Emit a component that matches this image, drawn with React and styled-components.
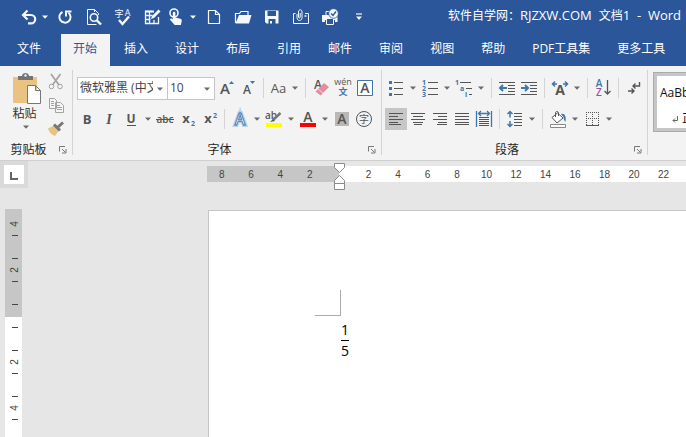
import React from "react";
import styled, { createGlobalStyle, css } from "styled-components";

const GlobalStyle = createGlobalStyle`
  * { box-sizing: border-box; }
  body {
    margin: 0;
    overflow: hidden;
    background: #e6e6e6;
    color: #262626;
    font: 12px/16px "Open Sans", "Noto Sans CJK SC", sans-serif;
  }
  button, input { font: inherit; color: inherit; }
  svg { overflow: visible; }
`;

const blue = "#2b579a";
const ink = "#555555";
const accent = "#3f76ac";

const Window = styled.div`
  display: flex;
  flex-direction: column;
  min-height: 100vh;
  overflow: hidden;
`;

const TitleBar = styled.header`
  display: flex;
  align-items: center;
  height: 34px;
  padding: 0 5px 0 18px;
  background: ${blue};
  color: #fff;
`;

const QuickAccess = styled.div`
  display: flex;
  align-items: center;
  flex: 1;
`;

const PlainButton = styled.button`
  display: flex;
  align-items: center;
  justify-content: center;
  flex: none;
  padding: 0;
  border: 0;
  background: none;
  white-space: nowrap;
`;

const QuickButton = styled(PlainButton)`
  width: ${(p) => p.$w || 29}px;
  height: 24px;
  color: #f4f7fc;
`;

const Title = styled.h1`
  display: flex;
  align-items: baseline;
  gap: 7px;
  margin: 0;
  padding-bottom: 4px;
  font-size: 12px;
  font-weight: 400;
  white-space: pre;
`;

const Latin = styled.span`
  font-size: 13px;
`;

const TabBar = styled.nav`
  display: flex;
  gap: 2px;
  height: 32px;
  padding-left: 5px;
  background: ${blue};
`;

const Tab = styled(PlainButton)`
  padding: 0 13px 2px 12px;
  color: #fff;
  ${(p) => p.$file && css`margin-right: 5px;`}
  ${(p) => p.$active && css`background: #f3f3f3; color: ${blue};`}
`;

const Ribbon = styled.div`
  display: flex;
  flex: none;
  height: 95px;
  overflow: hidden;
  background: #f3f3f3;
  border-bottom: 1px solid #cfcfcf;
`;

const Group = styled.section`
  position: relative;
  display: flex;
  flex-direction: column;
  flex: none;
  width: ${(p) => p.$w}px;
  padding: 10px 1px 1px 3px;
  gap: 7px;
  &::after {
    content: "";
    position: absolute;
    inset: 4px 0 5px auto;
    width: 1px;
    background: #d4d4d4;
  }
`;

const Row = styled.div`
  display: flex;
  align-items: center;
  height: 24px;
`;

const Divider = styled.span`
  flex: none;
  width: 1px;
  height: 20px;
  margin: 0 4px;
  background: #d4d4d4;
`;

const Tool = styled(PlainButton)`
  width: ${(p) => p.$w || 22}px;
  height: 22px;
  color: ${ink};
  font-size: 13px;
  background: ${(p) => (p.$pressed ? "#c6c6c6" : "none")};
`;

const CaretButton = styled(PlainButton)`
  width: 12px;
  height: 22px;
  color: #6a6a6a;
`;

const GroupFooter = styled.footer`
  display: flex;
  align-items: center;
  margin-top: auto;
  height: 18px;
`;

const GroupLabel = styled.span`
  flex: 1;
  text-align: center;
`;

const Launcher = styled(PlainButton)`
  width: 18px;
  height: 14px;
`;

const ClipboardBody = styled.div`
  display: flex;
  flex: none;
  height: 62px;
  gap: 6px;
  margin-top: -4px;
`;

const PasteButton = styled(PlainButton)`
  flex-direction: column;
  justify-content: flex-start;
  width: 40px;
  padding-left: 5px;
  color: #6a6a6a;
`;

const PasteLabel = styled.span`
  margin: 1px 2px 3px 0;
  color: #333;
`;

const SmallTools = styled.div`
  display: flex;
  flex-direction: column;
  gap: 1px;
  margin-left: -4px;
  margin-top: -1px;
`;

const Combo = styled.label`
  display: flex;
  flex: none;
  width: ${(p) => p.$w}px;
  height: 23px;
  padding-right: 1px;
  margin-left: ${(p) => (p.$joined ? "-1px" : "1px")};
  border: 1px solid #c6c6c6;
  background: #fff;
`;

const ComboInput = styled.input`
  flex: 1;
  min-width: 0;
  padding: 0 1px 0 2px;
  border: 0;
  outline: 0;
  background: none;
  color: #444;
`;

const StyleGallery = styled.div`
  flex: 1;
  min-width: 0;
  padding: 6px 0 0 5px;
`;

const StyleCard = styled(PlainButton)`
  flex-direction: column;
  align-items: flex-start;
  justify-content: space-between;
  width: 76px;
  height: 60px;
  padding: 9px 3px 1px;
  color: #111;
  background: #fff;
  border: 4px solid #c6c6c6;
  outline: 1px solid #ababab;
  outline-offset: -1px;
`;

const StyleName = styled.span`
  display: flex;
  align-items: center;
  gap: 4px;
  padding-left: 12px;
`;

const Workspace = styled.main`
  display: grid;
  grid-template-columns: 207px minmax(0, 1fr);
  grid-template-rows: 48px minmax(0, 1fr);
  flex: 1;
`;

const TabStop = styled(PlainButton)`
  width: 28px;
  height: 27px;
  background: #fff;
  border: 4px solid #dadada;
`;

const HorizontalRuler = styled.div`
  position: relative;
  display: flex;
  height: 16px;
  margin-top: 5px;
  background: #fff;
  color: #444;
  font: 10px/17px "Liberation Sans", sans-serif;
  text-align: center;
`;

const RulerMargin = styled.div`
  display: grid;
  grid-template-columns: repeat(4, 2fr) 1fr;
  flex: none;
  width: 132px;
  background: #c6c6c6;
`;

const RulerScale = styled.div`
  display: flex;
  flex: 1;
  min-width: 0;
  overflow: hidden;
  padding-left: 15px;
`;

const RulerNumber = styled.span`
  flex: none;
  width: 29px;
  &:nth-child(even) { width: 30px; }
`;

const MarginNumber = styled.span``;

const IndentMarker = styled.svg`
  position: absolute;
  left: 126px;
  top: -4px;
`;

const VerticalRuler = styled.div`
  display: flex;
  flex-direction: column;
  width: 17px;
  margin-left: 5px;
  font: 10px/14px "Liberation Sans", sans-serif;
`;

const VerticalPart = styled.div`
  display: flex;
  flex-direction: column;
  align-items: center;
  gap: 22px;
  flex: ${(p) => (p.$margin ? "none" : "1")};
  padding: ${(p) => (p.$margin ? "3px 0 0 3px" : "0 0 0 3px")};
  background: ${(p) => (p.$margin ? "#c6c6c6" : "#fff")};
`;

const VerticalMark = styled.div`
  display: flex;
  align-items: center;
  justify-content: center;
  flex: none;
  width: 6px;
  height: ${(p) => p.$h || 24}px;
  border-top: ${(p) => (p.$top ? "1px solid #444" : "0")};
  border-bottom: ${(p) => (p.$bottom ? "1px solid #444" : "0")};
`;

const Rotated = styled.span`
  transform: rotate(-90deg);
  color: #444;
`;

const Page = styled.article`
  margin: 1px 0 0 1px;
  padding: 79px 106px;
  background: #fff;
  border: 1px solid #c6c6c6;
  border-width: 1px 0 0 1px;
`;

const MarginCorner = styled.div`
  width: 26px;
  height: 26px;
  border: solid #ababab;
  border-width: 0 1px 1px 0;
`;

const Fraction = styled.div`
  display: flex;
  flex-direction: column;
  width: 8px;
  margin: 4px 0 0 26px;
  color: #000;
  font: 14px/20px "Open Sans", sans-serif;
  text-align: center;
`;

const Numerator = styled.span`
  border-bottom: 1px solid #000;
`;

const ui = { fontFamily: '"Open Sans", "Noto Sans CJK SC", sans-serif' };

function Svg({ w = 20, h = 20, children, ...rest }) {
  return (
    <svg width={w} height={h} viewBox={`0 0 ${w} ${h}`} fill="none" stroke="currentColor" aria-hidden="true" {...rest}>
      {children}
    </svg>
  );
}

function Glyph({ children, ...rest }) {
  return <text stroke="none" fill="currentColor" textAnchor="middle" {...ui} {...rest}>{children}</text>;
}

function Triangle() {
  return <Svg w={6} h={4}><path d="M0 .5h6L3 3.8z" fill="currentColor" stroke="none" /></Svg>;
}

function Caret({ label }) {
  return <CaretButton aria-label={label}><Triangle /></CaretButton>;
}

function Lines({ rows, color = ink }) {
  return rows.map(([x1, x2, y], i) => <path key={i} d={`M${x1} ${y}.5H${x2}`} stroke={color} />);
}

const quick = [
  ["撤消", 22, <Svg key="i"><path d="M4.500 8H12a4.200 4.200 0 0 1 0 8.400H9" strokeWidth="2.200" /><path d="M8.500 3.500L4 8l4.500 4.500" strokeWidth="2.200" /></Svg>],
  ["撤消选项", 10, <Triangle key="i" />],
  ["重复", 29, <Svg key="i"><path d="M7.500 5A5.600 5.600 0 1 0 13.500 5.700" strokeWidth="2" /><path d="M11 9.500V4.500H16.500" strokeWidth="2" /></Svg>],
  ["打印预览", 29, <Svg key="i"><path d="M12.500 17.500H3.500V2.500H10.500L14.500 6.500V8M10.500 2.500V5" /><circle cx="10" cy="10.500" r="3.700" strokeWidth="1.600" /><path d="M12.800 13.300L17 17.500" strokeWidth="2.400" /></Svg>],
  ["拼写和语法", 29, <Svg key="i"><Glyph x="6" y="10" fontSize="9">字</Glyph><Glyph x="14.500" y="9" fontSize="9">A</Glyph><path d="M6 13l3.500 4L16 9.500" strokeWidth="2.400" /></Svg>],
  ["绘制表格", 29, <Svg key="i"><path d="M10 4.500H3.500v12h13V10M3.500 8.500h7M3.500 12.500h5M7.500 5v11.500M12 13v3.500" strokeWidth="1.300" /><path d="M3 4.500h9" strokeWidth="2" /><path d="M9 12l1-3 6.500-6.500 2 2L12 11z" fill="currentColor" stroke="none" /></Svg>],
  ["触摸/鼠标模式", 20, <Svg key="i"><circle cx="8" cy="6" r="4" strokeWidth="1.600" /><path d="M6.800 6c0-1.700 2.600-1.700 2.600 0v4.500l5 1.200c1.400.4 1.500 1.300 1.300 2.600l-.8 3.700H8.700L4.300 13c-.8-1 .3-2 1.400-1.400l1.100.8z" fill="currentColor" stroke="none" /></Svg>],
  ["触摸选项", 13, <Triangle key="i" />],
  ["新建", 29, <Svg key="i"><path d="M4.500 3.500h7l4 4v9h-11zM11.500 3.500v4h4" strokeWidth="1.200" /></Svg>],
  ["打开", 29, <Svg key="i"><path d="M2.500 16V6.500h4l1.500-2h7V8" strokeWidth="1.200" /><path d="M2.500 16.500L6 8h12.500L16 16.500z" fill="currentColor" stroke="none" /></Svg>],
  ["保存", 29, <Svg key="i"><path d="M3 3.500h13.500v13H4.500L3 15zM5.500 4v5h8.500V4zM6.500 12v4.500h7V12z" fill="currentColor" fillRule="evenodd" stroke="none" /><path d="M8 14h2v2.500H8z" fill="currentColor" stroke="none" /></Svg>],
  ["电子邮件", 29, <Svg key="i"><path d="M4.500 6.500h-2v10h15v-10H14" /><path d="M6 7v3.500c0 4 5 4 5 0V5c0-3-3.500-3-3.500 0v5c0 1.400 1.700 1.400 1.700 0V6" /><path d="M13.500 9h2" strokeWidth="1.500" /></Svg>],
  ["快速打印", 29, <Svg key="i"><path d="M6 8V4.500h5" /><path d="M2 8h15.500v7H15v-2H5v2H2z" fill="currentColor" stroke="none" /><path d="M6.500 11.500h7v6h-7z" fill={blue} /><circle cx="13.500" cy="6.500" r="4.800" fill="currentColor" stroke={blue} strokeWidth=".8" /><path d="M11 6.500l2 2L16 4.500" stroke={blue} strokeWidth="1.300" /></Svg>],
  ["自定义快速访问工具栏", 29, <Svg key="i" w={6} h={8}><path d="M0 1h6" strokeWidth="1.200" /><path d="M0 3.500h6l-3 3.500z" fill="currentColor" stroke="none" /></Svg>],
];

const tabs = ["文件", "开始", "插入", "设计", "布局", "引用", "邮件", "审阅", "视图", "帮助", "PDF工具集", "更多工具"];

function Footer({ children }) {
  return (
    <GroupFooter>
      <GroupLabel>{children}</GroupLabel>
      <Launcher aria-label={`${children}设置`}>
        <Svg w={8} h={8}><path d="M.5 5.500V.5H6M3 3l3 3M7 3v4H3" stroke="#777" /></Svg>
      </Launcher>
    </GroupFooter>
  );
}

function ClipboardGroup() {
  return (
    <Group $w={73}>
      <ClipboardBody>
        <PasteButton>
          <Svg w={30} h={33}>
            <path d="M2 5h24v26H2z" fill="#eac282" stroke="none" />
            <path d="M7 8V4h4c0-4 7-4 7 0h4v4z" fill="#737373" stroke="none" />
            <circle cx="14.500" cy="3.500" r="1.200" fill="#f3f3f3" stroke="none" />
            <path d="M16.500 13.500h8l5 5v13h-13zM24.500 13.500v5h5" fill="#fff" stroke="#777" />
          </Svg>
          <PasteLabel>粘贴</PasteLabel>
          <Triangle />
        </PasteButton>
        <SmallTools>
          <Tool aria-label="剪切"><Svg><path d="M5 2l8 11M14.500 2L6.500 13" stroke="#a3a3a3" strokeWidth="1.700" /><circle cx="5.500" cy="14.500" r="2.300" stroke="#a3a3a3" /><circle cx="14" cy="14.500" r="2.300" stroke="#a3a3a3" /></Svg></Tool>
          <Tool aria-label="复制"><Svg><path d="M3.500 3.500h5l2 2v8h-7zM9.500 7.500h5l3 3v7h-8z" fill="#f5f5f5" stroke="#a3a3a3" /><path d="M5 6.500h3M5 8.500h3M5 10.500h3M11 10.500h3M11 12.500h5M11 14.500h5" stroke="#a3a3a3" /></Svg></Tool>
          <Tool aria-label="格式刷"><Svg><path d="M2 10.500l6-3 5 5-4 5.500c-3-1-6-3.500-7-7.500z" fill="#eac282" stroke="none" /><path d="M8 6.500l6 6" stroke="#777" strokeWidth="3" /><path d="M12 9l5-4.500" stroke="#777" strokeWidth="3" /></Svg></Tool>
        </SmallTools>
      </ClipboardBody>
      <Footer>剪贴板</Footer>
    </Group>
  );
}

function FontGroup() {
  return (
    <Group $w={309}>
      <Row>
        <Combo $w={91}><ComboInput aria-label="字体" defaultValue="微软雅黑 (中文标题)" /><Caret label="字体列表" /></Combo>
        <Combo $w={48} $joined><ComboInput aria-label="字号" defaultValue="10" /><Caret label="字号列表" /></Combo>
        <Tool aria-label="增大字号"><Svg><Glyph x="9" y="16" fontSize="15" fontWeight="600">A</Glyph><path d="M13 6h5l-2.500-3z" fill={accent} stroke="none" /></Svg></Tool>
        <Tool aria-label="缩小字号"><Svg><Glyph x="9" y="16" fontSize="12" fontWeight="600">A</Glyph><path d="M12 3h5l-2.500 3z" fill={accent} stroke="none" /></Svg></Tool>
        <Divider />
        <Tool $w={21} aria-label="更改大小写">Aa</Tool><Caret label="大小写选项" />
        <Divider />
        <Tool aria-label="清除格式"><Svg><Glyph x="7" y="11" fontSize="12" fontWeight="600">A</Glyph><path d="M4.500 13.500L13 5l5 4-8.500 8.500z" fill="#e58c9e" stroke="none" /><path d="M7 11l5 4" stroke="#f6d5dc" /></Svg></Tool>
        <Tool aria-label="拼音指南"><Svg><Glyph x="10" y="7" fontSize="9">wén</Glyph><Glyph x="10" y="17" fontSize="9" fontWeight="700" fill={accent}>文</Glyph></Svg></Tool>
        <Tool aria-label="字符边框"><Svg><path d="M2.500 2.500h15v15h-15z" stroke={accent} fill="#fff" /><Glyph x="10" y="15" fontSize="14" fontWeight="600">A</Glyph></Svg></Tool>
      </Row>
      <Row>
        <Tool aria-label="加粗"><b>B</b></Tool>
        <Tool aria-label="倾斜"><Svg><Glyph x="10" y="15" fontSize="14" fontStyle="italic" fontFamily="Liberation Serif" fontWeight="700">I</Glyph></Svg></Tool>
        <Tool aria-label="下划线"><Svg><Glyph x="10" y="14" fontSize="12" fontWeight="700">U</Glyph><path d="M6 16.500h9" /></Svg></Tool><Caret label="下划线选项" />
        <Tool aria-label="删除线"><Svg><Glyph x="10" y="14" fontSize="10" fontWeight="600">abc</Glyph><path d="M1 10.500h18" /></Svg></Tool>
        <Tool aria-label="下标"><Svg><Glyph x="9" y="14" fontSize="13" fontWeight="700">x</Glyph><Glyph x="16" y="17" fontSize="7" fontWeight="700" fill={accent}>2</Glyph></Svg></Tool>
        <Tool aria-label="上标"><Svg><Glyph x="9" y="14" fontSize="13" fontWeight="700">x</Glyph><Glyph x="16" y="9" fontSize="7" fontWeight="700" fill={accent}>2</Glyph></Svg></Tool>
        <Divider />
        <Tool aria-label="文本效果"><Svg><text x="10" y="16" fontSize="16" textAnchor="middle" fill="#fff" stroke="#b5d2ec" strokeWidth="4" {...ui}>A</text><text x="10" y="16" fontSize="16" fontWeight="600" textAnchor="middle" fill="#fff" stroke={accent} strokeWidth=".9" {...ui}>A</text></Svg></Tool><Caret label="文本效果选项" />
        <Tool aria-label="突出显示"><Svg><Glyph x="7" y="10" fontSize="10" fontWeight="600">ab</Glyph><path d="M9 11l7.500-7" stroke="#777" strokeWidth="2.500" /><path d="M6 13l3-3 2 2z" fill="#555" stroke="none" /><path d="M2 14h16v4H2z" fill="#ff0" stroke="none" /></Svg></Tool><Caret label="突出显示颜色" />
        <Tool aria-label="字体颜色"><Svg><Glyph x="10" y="13" fontSize="14" fontWeight="600">A</Glyph><path d="M2 14h16v4H2z" fill="#f00" stroke="none" /></Svg></Tool><Caret label="字体颜色选项" />
        <Tool aria-label="字符底纹"><Svg><path d="M3 3h14v14H3z" fill="#b8b8b8" stroke="none" /><Glyph x="10" y="15" fontSize="14" fontWeight="600">A</Glyph></Svg></Tool>
        <Tool aria-label="带圈字符"><Svg><circle cx="10" cy="10" r="7.500" /><Glyph x="10" y="14" fontSize="10">字</Glyph></Svg></Tool>
      </Row>
      <Footer>字体</Footer>
    </Group>
  );
}

function ParagraphGroup() {
  return (
    <Group $w={266}>
      <Row>
        <Tool aria-label="项目符号"><Svg><path d="M3 3h3v3H3zM3 9h3v3H3zM3 15h3v3H3z" fill={accent} stroke="none" /><Lines rows={[[8, 17, 4], [8, 17, 10], [8, 17, 16]]} /></Svg></Tool><Caret label="项目符号选项" />
        <Tool aria-label="编号"><Svg>{[1, 2, 3].map((n) => <Glyph key={n} x="4" y={n * 6 + 1} fontSize="7" fontWeight="700" fill={accent}>{n}</Glyph>)}<Lines rows={[[8, 18, 4], [8, 18, 10], [8, 18, 16]]} /></Svg></Tool><Caret label="编号选项" />
        <Tool aria-label="多级列表"><Svg><Glyph x="3" y="7" fontSize="7" fontWeight="700" fill={accent}>1</Glyph><Glyph x="8" y="13" fontSize="7" fontWeight="700" fill={accent}>a</Glyph><Glyph x="12" y="19" fontSize="7" fontWeight="700" fill={accent}>i</Glyph><Lines rows={[[6, 17, 4], [12, 18, 10], [15, 18, 16]]} /></Svg></Tool><Caret label="多级列表选项" />
        <Divider />
        <Tool aria-label="减少缩进量"><Svg><Lines rows={[[2, 18, 4], [11, 18, 7], [11, 18, 10], [11, 18, 13], [2, 18, 16]]} /><path d="M3 10h7M6 7l-3 3 3 3" stroke={accent} strokeWidth="2" /></Svg></Tool>
        <Tool aria-label="增加缩进量"><Svg><Lines rows={[[2, 18, 4], [11, 18, 7], [11, 18, 10], [11, 18, 13], [2, 18, 16]]} /><path d="M2 10h7M6 7l3 3-3 3" stroke={accent} strokeWidth="2" /></Svg></Tool>
        <Divider />
        <Tool aria-label="中文版式"><Svg><Glyph x="10" y="17" fontSize="14" fontWeight="700">A</Glyph><path d="M2 6h5M13 6h5M5 3.500L2.500 6 5 8.500M15 3.500L17.500 6 15 8.500" stroke={accent} strokeWidth="1.500" /></Svg></Tool><Caret label="中文版式选项" />
        <Divider />
        <Tool aria-label="排序"><Svg><Glyph x="6" y="9" fontSize="10" fontWeight="600" fill={accent}>A</Glyph><Glyph x="6" y="18" fontSize="10" fontWeight="600" fill="#9d4fa6">Z</Glyph><path d="M14.500 2v14M11.500 13l3 3 3-3" strokeWidth="1.300" /></Svg></Tool>
        <Divider />
        <Tool aria-label="显示编辑标记"><Svg><path d="M15.500 4v4H9M11.500 5.500L9 8l2.500 2.500" strokeWidth="1.400" /><path d="M4 13h6M7.500 10.500L10 13l-2.500 2.500" strokeWidth="1.400" /></Svg></Tool>
      </Row>
      <Row>
        <Tool $pressed aria-pressed="true" aria-label="左对齐"><Svg><Lines rows={[[3, 17, 4], [3, 12, 7], [3, 17, 10], [3, 12, 13], [3, 15, 15]]} /></Svg></Tool>
        <Tool aria-label="居中"><Svg><Lines rows={[[3, 17, 4], [5, 15, 7], [3, 17, 10], [5, 15, 13], [6, 14, 15]]} /></Svg></Tool>
        <Tool aria-label="右对齐"><Svg><Lines rows={[[3, 17, 4], [8, 17, 7], [3, 17, 10], [8, 17, 13], [7, 17, 15]]} /></Svg></Tool>
        <Tool aria-label="两端对齐"><Svg><Lines rows={[[3, 17, 4], [3, 17, 7], [3, 17, 10], [3, 17, 13], [3, 17, 15]]} /></Svg></Tool>
        <Tool aria-label="分散对齐"><Svg><path d="M2.500 2v16M17.500 2v16M5 4.500h10M7 2L4.500 4.500 7 7M13 2l2.500 2.500L13 7" stroke={accent} strokeWidth="1.300" /><Lines rows={[[5, 15, 8], [5, 15, 10], [5, 15, 12], [5, 15, 14], [5, 15, 16]]} /></Svg></Tool>
        <Divider />
        <Tool aria-label="行距"><Svg><path d="M5 2.500v6M5 12v5.500M2.500 5L5 2.500 7.500 5M2.500 15L5 17.500 7.500 15" stroke={accent} strokeWidth="1.500" /><Lines rows={[[9, 17, 4], [9, 17, 7], [9, 17, 10], [9, 17, 13], [9, 17, 16]]} /></Svg></Tool><Caret label="行距选项" />
        <Divider />
        <Tool aria-label="底纹"><Svg><path d="M4 8.500L9.500 4l5.500 5-6 5z" fill="#fff" /><path d="M7.500 8V4c0-2 3-2 3 0v3" /><path d="M13 5c3.500-1 5.500 2 4.500 8-1-1-2-3-2-5z" fill={accent} stroke="none" /><path d="M2.500 15.500h15v3h-15z" fill="#fff" stroke="#888" /></Svg></Tool><Caret label="底纹选项" />
        <Tool aria-label="边框"><Svg><path d="M4.500 3v13M10.500 3v13M16.500 3v13M4 3.500h13M4 9.500h13" strokeDasharray="1 1" /><path d="M4 16.500h13" /></Svg></Tool><Caret label="边框选项" />
      </Row>
      <Footer>段落</Footer>
    </Group>
  );
}

export default function App() {
  return (
    <Window>
      <GlobalStyle />
      <TitleBar>
        <QuickAccess>
          {quick.map(([label, w, icon]) => <QuickButton key={label} $w={w} aria-label={label}>{icon}</QuickButton>)}
        </QuickAccess>
        <Title>
          <span>软件自学网：<Latin>RJZXW.COM</Latin></span>
          <span>文档<Latin>1  -  Word</Latin></span>
        </Title>
      </TitleBar>
      <TabBar>
        {tabs.map((name) => <Tab key={name} $file={name === "文件"} $active={name === "开始"}>{name}</Tab>)}
      </TabBar>
      <Ribbon>
        <ClipboardGroup />
        <FontGroup />
        <ParagraphGroup />
        <StyleGallery>
          <StyleCard>
            <span>AaBbCcDd</span>
            <StyleName>
              <Svg w={6} h={8}><path d="M5.500 1v4.500H1M3 3.500L1 5.500l2 2" stroke="#666" /></Svg>
              正文
            </StyleName>
          </StyleCard>
        </StyleGallery>
      </Ribbon>
      <Workspace>
        <TabStop aria-label="制表符"><Svg w={8} h={8}><path d="M1 1v7h7" stroke="#666" strokeWidth="2" /></Svg></TabStop>
        <HorizontalRuler>
          <RulerMargin>{[8, 6, 4, 2].map((n) => <MarginNumber key={n}>{n}</MarginNumber>)}</RulerMargin>
          <RulerScale>{Array.from({ length: 11 }, (_, i) => <RulerNumber key={i}>{i * 2 + 2}</RulerNumber>)}</RulerScale>
          <IndentMarker width="13" height="30" viewBox="0 0 13 30" fill="#fff" stroke="#8a8a8a">
            <path d="M1.500 1.500h10v4l-5 5-5-5zM6.500 13.500l5 5v3h-10v-3zM1.500 21.500h10v6h-10z" />
          </IndentMarker>
        </HorizontalRuler>
        <VerticalRuler>
          <VerticalPart $margin>
            <VerticalMark $bottom><Rotated>4</Rotated></VerticalMark>
            <VerticalMark $top $bottom><Rotated>2</Rotated></VerticalMark>
            <VerticalMark $top $h={13} />
          </VerticalPart>
          <VerticalPart>
            <VerticalMark $bottom $h={11} />
            <VerticalMark $top $bottom><Rotated>2</Rotated></VerticalMark>
            <VerticalMark $top $bottom><Rotated>4</Rotated></VerticalMark>
          </VerticalPart>
        </VerticalRuler>
        <Page>
          <MarginCorner />
          <Fraction><Numerator>1</Numerator><span>5</span></Fraction>
        </Page>
      </Workspace>
    </Window>
  );
}
